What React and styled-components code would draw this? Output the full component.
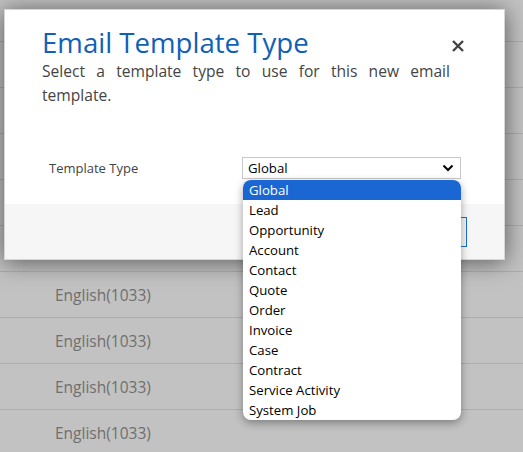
import React from 'react';
import styled, { createGlobalStyle } from 'styled-components';

const GlobalStyle = createGlobalStyle`
  html, body {
    margin: 0;
    padding: 0;
    width: 523px;
    height: 452px;
    overflow: hidden;
    background: #c2c2c2;
    font-family: 'Open Sans', 'Noto Sans', sans-serif;
  }
`;

const Page = styled.div`
  position: relative;
  width: 523px;
  height: 452px;
  overflow: hidden;
  background: #c2c2c2;
`;

const RowList = styled.div`
  display: flex;
  flex-direction: column;
  margin-top: -4px;
`;

const Row = styled.div`
  height: 46px;
  box-sizing: border-box;
  border-bottom: 1px solid #adadad;
  display: flex;
  align-items: center;
  padding-left: 55px;
  font-size: 15.5px;
  color: #6f6f6f;
`;

const Dialog = styled.div`
  position: absolute;
  left: 4px;
  top: 9px;
  width: 501px;
  height: 251px;
  box-sizing: border-box;
  background: #fff;
  border: 1px solid #d6d6d6;
  box-shadow: 0 2px 22px rgba(0, 0, 0, 0.55);
  display: flex;
  flex-direction: column;
`;

const Body = styled.div`
  flex: 1;
  padding: 16px 39px 0 37px;
  position: relative;
`;

const Header = styled.div`
  display: flex;
  justify-content: space-between;
  align-items: flex-start;
`;

const Title = styled.h1`
  margin: 0;
  font-weight: 400;
  font-size: 27.6px;
  line-height: 32px;
  color: #1160b7;
`;

const Close = styled.button`
  border: 0;
  background: none;
  padding: 0;
  margin: 13px 0 0 0;
  width: 14px;
  height: 14px;
  display: flex;
  cursor: pointer;
`;

const Subtitle = styled.p`
  margin: 1px 0 0;
  font-size: 15.6px;
  line-height: 24px;
  color: #444;
  text-align: justify;
  width: 408px;
`;

const Field = styled.div`
  display: flex;
  align-items: center;
  margin-top: 50px;
  padding-left: 7px;
`;

const Label = styled.label`
  flex-shrink: 0;
  width: 193px;
  font-size: 13px;
  color: #444;
`;

const SelectBox = styled.div`
  position: relative;
  flex-shrink: 0;
  width: 219px;
  height: 22px;
  box-sizing: border-box;
  border: 1px solid #c8c8c8;
  display: flex;
  align-items: center;
  justify-content: space-between;
  padding: 0 6px 0 5px;
  font-size: 13.2px;
  color: #000;
`;

const Footer = styled.div`
  height: 55px;
  background: #f6f6f6;
  display: flex;
  justify-content: flex-end;
  align-items: flex-start;
  padding: 13px 37px 0 0;
  box-sizing: border-box;
`;

const Button = styled.button`
  width: 86px;
  height: 30px;
  border: 1px solid #1a6fd0;
  background: #f4f4f4;
  font-family: inherit;
  font-size: 14px;
`;

const Menu = styled.ul`
  position: absolute;
  left: 0;
  top: 22px;
  width: 218px;
  margin: 0;
  padding: 0;
  list-style: none;
  background: #fff;
  border-radius: 8px;
  overflow: hidden;
  box-shadow: 0 3px 8px rgba(0, 0, 0, 0.35);
  z-index: 2;
`;

const Option = styled.li`
  height: 20px;
  line-height: 20px;
  padding-left: 6px;
  font-size: 13.2px;
  color: ${(p) => (p.$active ? '#fff' : '#000')};
  background: ${(p) => (p.$active ? '#1a67d4' : 'transparent')};
`;

const types = [
  'Global',
  'Lead',
  'Opportunity',
  'Account',
  'Contact',
  'Quote',
  'Order',
  'Invoice',
  'Case',
  'Contract',
  'Service Activity',
  'System Job',
];

const App = () => {
  const rows = Array.from({ length: 10 });
  return (
    <Page>
      <GlobalStyle />
      <RowList>
        {rows.map((_, i) => (
          <Row key={i}>English(1033)</Row>
        ))}
      </RowList>

      <Dialog>
        <Body>
          <Header>
            <Title>Email Template Type</Title>
            <Close aria-label="Close">
              <svg width="14" height="14" viewBox="0 0 14 14">
                <path d="M2 2 L12 12 M12 2 L2 12" stroke="#444" strokeWidth="2.4" />
              </svg>
            </Close>
          </Header>
          <Subtitle>Select a template type to use for this new email template.</Subtitle>
          <Field>
            <Label>Template Type</Label>
            <SelectBox>
              <span>Global</span>
              <svg width="12" height="8" viewBox="0 0 12 8">
                <path d="M1.5 1.5 L6 6 L10.5 1.5" fill="none" stroke="#000" strokeWidth="2" />
              </svg>
              <Menu>
                {types.map((t, i) => (
                  <Option key={t} $active={i === 0}>
                    {t}
                  </Option>
                ))}
              </Menu>
            </SelectBox>
          </Field>
        </Body>
        <Footer>
          <Button>OK</Button>
        </Footer>
      </Dialog>
    </Page>
  );
};

export default App;
